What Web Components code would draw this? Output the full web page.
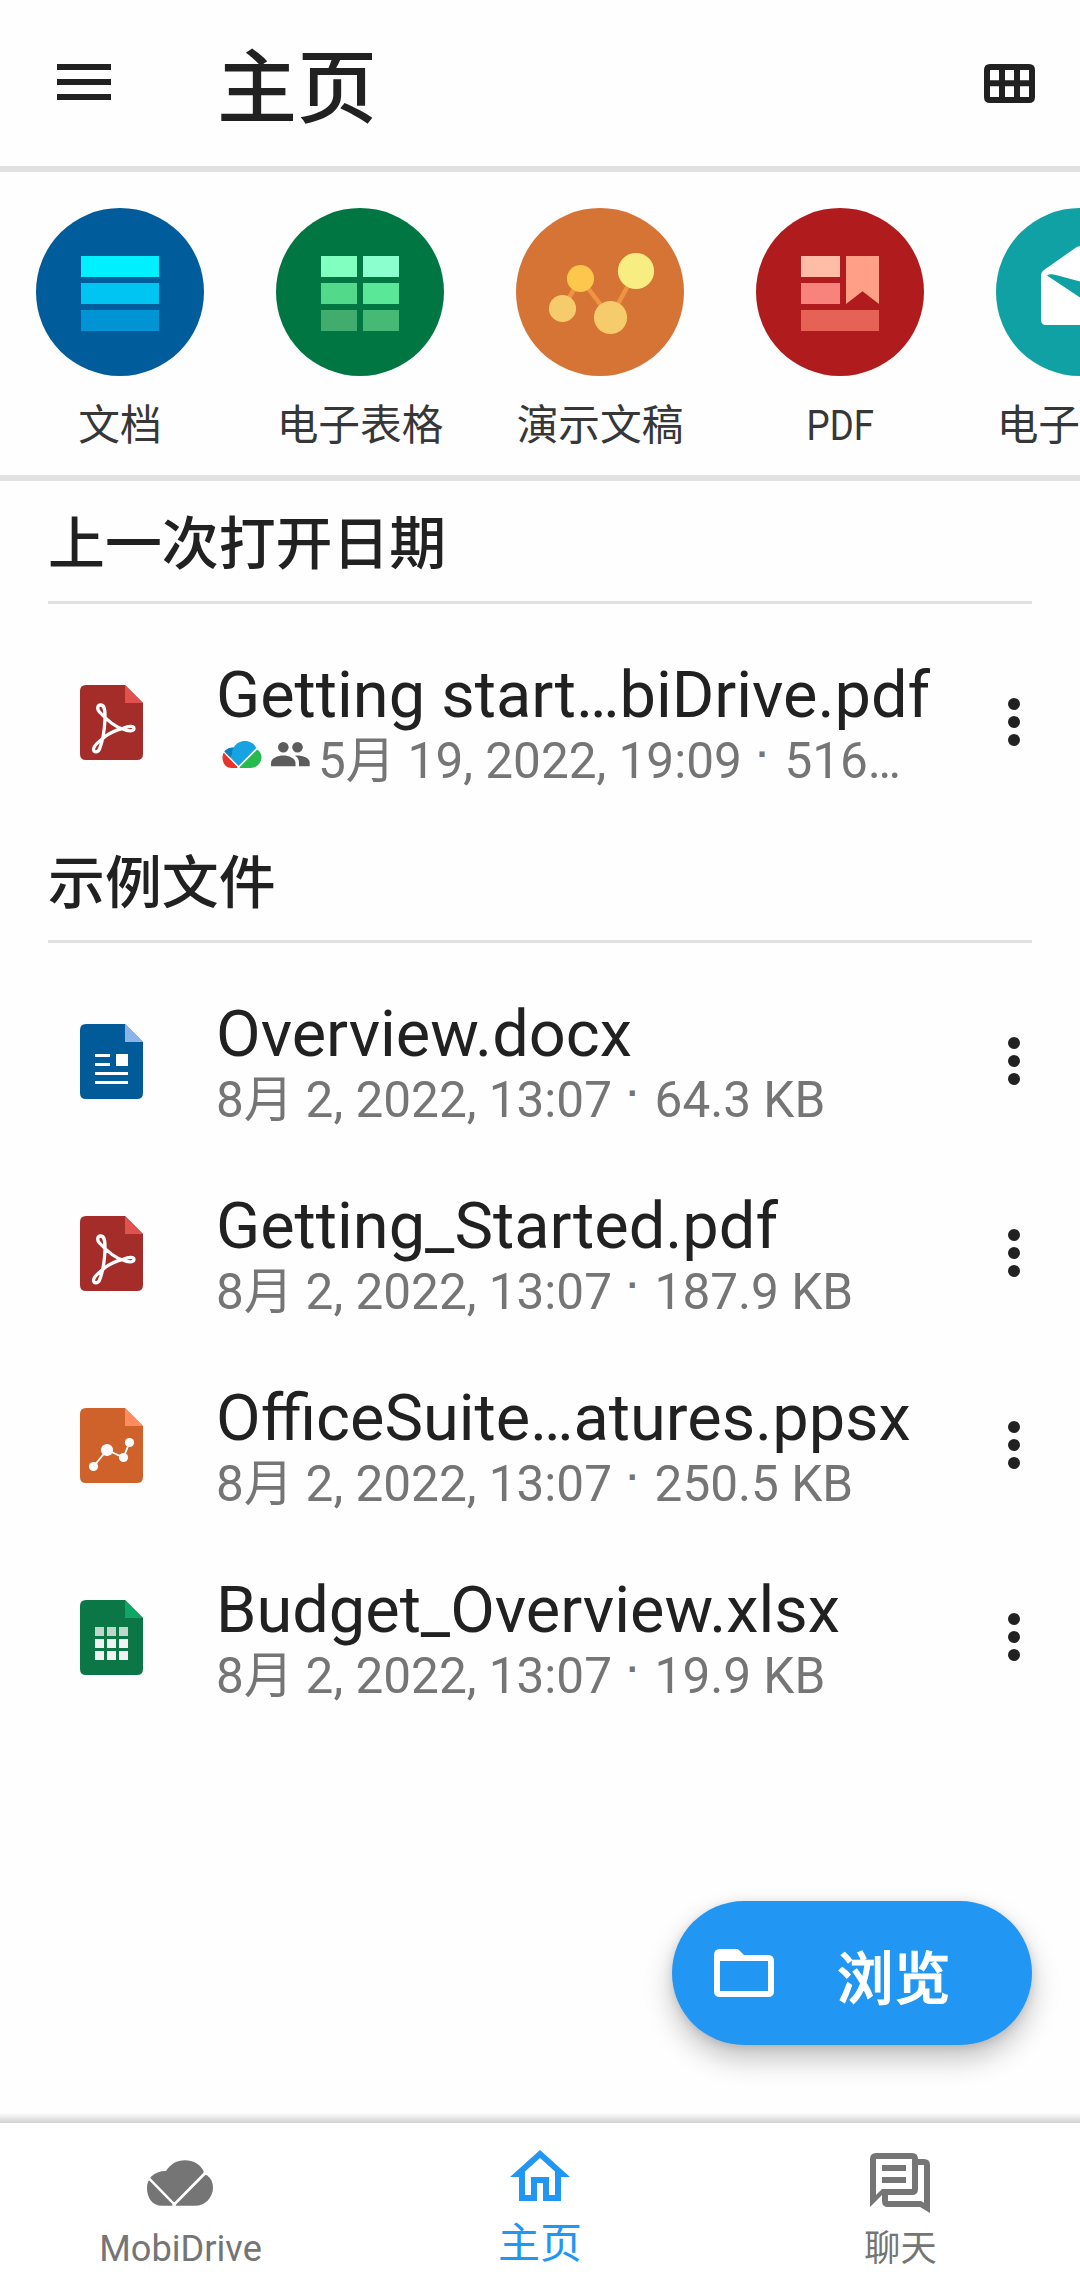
<!DOCTYPE html>
<html lang="zh-CN">
<head>
<meta charset="utf-8">
<title>主页</title>
<style>
html,body{margin:0;padding:0;background:#fefefe}
body{width:1080px;height:2291px;overflow:hidden;font-family:Roboto,"Noto Sans CJK SC",sans-serif;color:#212121}
</style>
</head>
<body>
<office-home></office-home>
<script>
const page = (bg, fold, art) => `<svg width="63" height="75" viewBox="0 0 63 75"><path fill="${bg}" d="M6 0H45L63 18V69Q63 75 57 75H6Q0 75 0 69V6Q0 0 6 0Z"/><path fill="${fold}" d="M45 0L63 18H45Z"/>${art}</svg>`;
const cloud = (left, mid, right, extra = '') => `<path fill="${mid}" d="M3.8 18.3Q3 17.300 4 16.500Q10 10.700 19 10.800C23 4 30 0 38 0C46 0 53 4 56.500 10.500Q57 12 56 13L28 41.500Q27.300 42.300 26.500 41.500Z"/>${extra}<path fill="${left}" d="M1.300 21Q2 20 2.800 20.800L25 43.500Q26.300 45.500 24.500 45.700H15C5 45.500 0 37 0 28Q0 24 1.300 21Z"/><path fill="${right}" d="M58 15.200Q59 14.300 60 15.200C64 18 66 22.500 66 27.500C66 37 58 45.700 48 45.700H30Q28 45.500 29.300 44Z"/>`;
const dots6 = (xs, ys, fills) => ys.map((y, r) => xs.map(x => `<rect x="${x}" y="${y}" width="9" height="9" fill="${fills[r]}"/>`).join('')).join('');

const ICONS = {
  menu: `<svg width="54" height="36" fill="#212121"><path d="M0 0h54v6H0zM0 15h54v6H0zM0 30h54v6H0z"/></svg>`,
  grid: `<svg width="51" height="39"><path fill="#212121" fill-rule="evenodd" d="M6 0H45Q51 0 51 6V33Q51 39 45 39H6Q0 39 0 33V6Q0 0 6 0ZM6 6V16.300H15V6ZM21 6V16.300H30V6ZM36 6V16.300H45V6ZM6 22.300V33H15V22.300ZM21 22.300V33H30V22.300ZM36 22.300V33H45V22.300Z"/></svg>`,
  more: `<svg width="12" height="48" fill="#212121"><circle cx="6" cy="6" r="6"/><circle cx="6" cy="24" r="6"/><circle cx="6" cy="42" r="6"/></svg>`,
  people: `<svg width="39" height="24" viewBox="0 0 39 24" fill="#5c5c5c"><circle cx="12.300" cy="5.200" r="5.300"/><circle cx="26.500" cy="5.200" r="5.300"/><path d="M0 24.300V21C0 16 7 13.500 12.300 13.500S24.500 16 24.500 21V24.300Z"/><path d="M25 13.600C32 13.500 38.700 16 38.700 20.500V24.300H28V20.500C28 17.500 26.500 15 24 13.700Z"/></svg>`,
  drive: `<svg width="40" height="27" viewBox="0 0 66 45.700">${cloud('#e7342c', '#17a3e1', '#26bb4e', '<path fill="#0f7fbb" d="M3.800 18.300Q3 17.300 4 16.500Q10 10.700 19 10.800Q15.500 16 16 23L13 27.700Z"/>')}</svg>`,
  pdf: page('#a42c29', '#e05250', `<path fill="none" stroke="#fff" stroke-width="3.300" stroke-linejoin="round" d="M43 43.300C36 45 30 47.500 24.500 52C20 56 13.500 60 13.500 64.300C13.500 67.800 17.800 67.800 19.500 64C22 58 24.500 45 25 34C25 28 25.500 20.500 21 20C17.500 19.600 16.500 24 19.500 27C25 33 35 42 43 44C47 46 54 47 54 43.500C54 40 48 41.500 43 43.300Z"/>`),
  docx: page('#005b98', '#8ab4e8', `<path fill="#fff" d="M15 30h15v3H15zM15 39h15v3H15zM36 30h12v12H36zM15 48h33v3H15zM15 57h33v3H15z"/>`),
  pptx: page('#cf612b', '#ff8c5a', `<path fill="none" stroke="#fff" stroke-width="1.800" d="M13.500 58.500L27 42L43.500 49.500L49.500 34.300"/><g fill="#fff"><circle cx="13.500" cy="58.500" r="4.600"/><circle cx="27" cy="42" r="6.100"/><circle cx="43.500" cy="49.500" r="4.600"/><circle cx="49.500" cy="34.500" r="4.600"/></g>`),
  xlsx: page('#0b7646', '#0ca863', dots6([15, 27, 39], [27, 39, 51], ['#bdd8cb', '#f1f1f1', '#f1f1f1'])),
  folder: `<svg width="72" height="72" viewBox="0 0 24 24" fill="#fff"><path fill-rule="evenodd" d="M20 6h-8l-1.700-1.700Q10 4 9.500 4H4q-2 0-2 2v12q0 2 2 2h16q2 0 2-2V8q0-2-2-2zM20 18H4V8h16z"/></svg>`,
  cloud: `<svg width="66" height="46" viewBox="0 0 66 45.700">${cloud('#757575', '#757575', '#757575')}</svg>`,
  home: `<svg width="72" height="72" viewBox="0 0 24 24" fill="#2196f3"><path d="M12 5.690l5 4.500V18h-2v-6H9v6H7v-7.810l5-4.500M12 3L2 12h3v8h6v-6h2v6h6v-8h3L12 3z"/></svg>`,
  chat: `<svg width="60" height="60" fill="#757575"><path fill-rule="evenodd" d="M0 54V6Q0 0 6 0H42Q48 0 48 6H54Q60 6 60 12V60L50 54H18Q12 54 12 48V42ZM6 6V42L12 36H42V6ZM48 12V36Q48 42 42 42H18V48H51L54 49.700V12Z"/><path d="M12 12h24v6H12zM12 24h24v6H12z"/></svg>`,
  catDoc: `<svg width="168" height="168"><circle cx="84" cy="84" r="84" fill="#005c9b"/><path fill="#00f0ff" d="M45 48h78v21H45z"/><path fill="#00c4f1" d="M45 75h78v21H45z"/><path fill="#0094d4" d="M45 102h78v21H45z"/></svg>`,
  catSheet: `<svg width="168" height="168"><circle cx="84" cy="84" r="84" fill="#007742"/><path fill="#80ffc0" d="M45 48h36v21H45z"/><path fill="#8cffcf" d="M87 48h36v21H87z"/><path fill="#52d98a" d="M45 75h36v21H45z"/><path fill="#5ae898" d="M87 75h36v21H87z"/><path fill="#42ab6e" d="M45 102h36v21H45z"/><path fill="#46b974" d="M87 102h36v21H87z"/></svg>`,
  catSlides: `<svg width="168" height="168"><circle cx="84" cy="84" r="84" fill="#d67435"/><path fill="none" stroke="#ee9443" stroke-width="4.500" d="M46.500 100.500L64.500 70.500L94.500 109.500L120 63"/><circle cx="64.500" cy="70.500" r="13.600" fill="#fdc74d"/><circle cx="46.500" cy="100.500" r="13.600" fill="#f5cb6c"/><circle cx="94.500" cy="109.500" r="16.600" fill="#f5cb6c"/><circle cx="120" cy="63" r="18.100" fill="#f8ed80"/></svg>`,
  catPdf: `<svg width="168" height="168"><circle cx="84" cy="84" r="84" fill="#b01c1e"/><path fill="#ffbda7" d="M45 48h39v21H45z"/><path fill="#f8837c" d="M45 75h39v21H45z"/><path fill="#ff9f88" d="M90 48h33v48L106.500 83.300L90 96z"/><path fill="#e66257" d="M45 102h78v21H45z"/></svg>`,
  catMail: `<svg width="168" height="168"><circle cx="84" cy="84" r="84" fill="#0fa1a4"/><path fill="#fff" d="M80 39.500Q84 37 88 39.500L120 62Q123 64 123 68V112Q123 117 118 117H50Q45 117 45 112V68Q45 64 48 62Z"/><path fill="#0fa1a4" d="M51 67.500Q54 65.500 60 67L84 73.500L108 67Q114 65.500 117 67.500L84 89.500Z"/></svg>`
};

const define = (name, css, html) => customElements.define(name, class extends HTMLElement {
  constructor() {
    super();
    this.attachShadow({ mode: 'open' });
  }
  connectedCallback() {
    const t = document.createElement('template');
    t.innerHTML = `<style>${css}</style>${html(this)}`;
    this.shadowRoot.replaceChildren(t.content.cloneNode(true));
  }
});

define('app-icon', ':host{display:flex;align-items:center;justify-content:center;flex:none}svg{display:block;overflow:visible}', el => ICONS[el.getAttribute('name')]);

define('top-bar', `
:host{display:flex;align-items:center;box-sizing:border-box;height:172px;border-bottom:6px solid #e1e1e1;padding:0 45px 0 57px}
h1{flex:1;margin:11px 0 0 106px;font-size:80px;line-height:100px;font-weight:500}
app-icon{align-self:flex-start;margin-top:64px}`,
() => `<app-icon name="menu"></app-icon><h1><slot></slot></h1><app-icon name="grid"></app-icon>`);

define('category-strip', `
:host{display:flex;box-sizing:border-box;height:309px;border-bottom:6px solid #e1e1e1;padding-top:36px;overflow:hidden}`, () => `<slot></slot>`);

define('category-item', `
:host{display:flex;flex-direction:column;align-items:center;flex:none;width:240px}
span{display:block;white-space:nowrap;margin-top:22px;font-size:41.700px;line-height:56px;color:#373737}
:host([narrow]) span{transform:scaleX(.88)}`,
el => `<app-icon name="${el.getAttribute('icon')}"></app-icon><span><slot></slot></span>`);

define('file-section', `
:host{display:block}
h2{margin:0 48px 22px;box-sizing:border-box;height:125px;border-bottom:3px solid #e1e1e1;padding-top:26px;font-size:56.900px;line-height:80px;font-weight:500}`,
el => `<h2>${el.getAttribute('heading')}</h2><slot></slot>`);

define('file-row', `
:host{display:flex;align-items:center;box-sizing:border-box;height:192px;padding:0 60px 0 80px}
.text{flex:1;margin:2px 0 0 73px;white-space:nowrap}
.name{font-size:64.900px;line-height:76px}
.meta{display:flex;font-size:49.500px;line-height:56px;color:#757575}
.dot{display:inline-block;width:18px;line-height:1;text-align:center;font:700 36px/1 "Liberation Sans",sans-serif;position:relative;top:-11px}
.badges{display:flex;gap:9px;margin:0 8px 0 6px;height:42px;align-items:center}`,
el => `<app-icon name="${el.getAttribute('type')}"></app-icon><div class="text"><div class="name"><slot></slot></div><div class="meta">${el.hasAttribute('shared') ? '<div class="badges"><app-icon name="drive"></app-icon><app-icon name="people"></app-icon></div>' : ''}<span>${el.getAttribute('meta').replace('·', '<span class="dot">·</span>')}</span></div></div><app-icon name="more"></app-icon>`);

define('browse-button', `
:host{display:flex;align-items:center;box-sizing:border-box;width:360px;height:144px;padding-left:36px;border-radius:72px;background:#2196f3;color:#fff;box-shadow:0 14px 28px rgba(0,0,0,.24),0 2px 10px rgba(0,0,0,.12)}
span{margin:14px 0 0 57px;font-size:56.500px;line-height:80px;font-weight:500;letter-spacing:.500px;-webkit-text-stroke:1px #fff}`,
() => `<app-icon name="folder"></app-icon><span><slot></slot></span>`);

define('bottom-nav', `
:host{display:flex;flex:none;height:168px;background:#fff;position:relative}
:host::before{content:"";position:absolute;left:0;right:0;top:-10px;height:10px;background:linear-gradient(#fdfdfd,#d0d0d0)}`,
() => `<slot></slot>`);

define('nav-item', `
:host{flex:1;display:flex;flex-direction:column;align-items:center;color:#757575;font-size:36.200px}
app-icon{height:72px;margin-top:24px}
span{line-height:44px;margin:8px 0 0 1px}
:host([active]){color:#2196f3;font-size:42px}
:host([active]) app-icon{margin-top:18px}
:host([active]) span{margin:9px 0 0}`,
el => `<app-icon name="${el.getAttribute('icon')}"></app-icon><span><slot></slot></span>`);

define('office-home', `
:host{display:flex;flex-direction:column;width:1080px;height:2291px;background:#fefefe}
main{flex:1;display:flex;flex-direction:column;margin-top:-2px}
browse-button{margin:auto 48px 78px auto}`,
() => `<top-bar>主页</top-bar>
<category-strip>
<category-item icon="catDoc">文档</category-item>
<category-item icon="catSheet">电子表格</category-item>
<category-item icon="catSlides">演示文稿</category-item>
<category-item icon="catPdf" narrow>PDF</category-item>
<category-item icon="catMail">电子邮件</category-item>
</category-strip>
<main>
<file-section heading="上一次打开日期">
<file-row type="pdf" shared meta="5月 19, 2022, 19:09 · 516…">Getting start…biDrive.pdf</file-row>
</file-section>
<file-section heading="示例文件">
<file-row type="docx" meta="8月 2, 2022, 13:07 · 64.3 KB">Overview.docx</file-row>
<file-row type="pdf" meta="8月 2, 2022, 13:07 · 187.9 KB">Getting_Started.pdf</file-row>
<file-row type="pptx" meta="8月 2, 2022, 13:07 · 250.5 KB">OfficeSuite…atures.ppsx</file-row>
<file-row type="xlsx" meta="8月 2, 2022, 13:07 · 19.9 KB">Budget_Overview.xlsx</file-row>
</file-section>
<browse-button>浏览</browse-button>
</main>
<bottom-nav>
<nav-item icon="cloud">MobiDrive</nav-item>
<nav-item icon="home" active>主页</nav-item>
<nav-item icon="chat">聊天</nav-item>
</bottom-nav>`);
</script>
</body>
</html>
